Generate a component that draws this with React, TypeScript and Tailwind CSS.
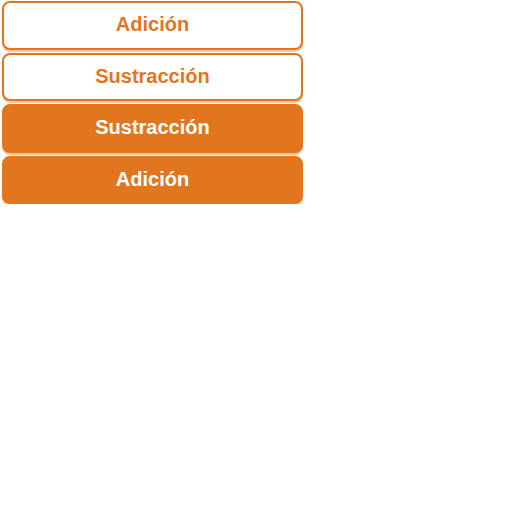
const items = [
  { label: "Adición", filled: false },
  { label: "Sustracción", filled: false },
  { label: "Sustracción", filled: true },
  { label: "Adición", filled: true },
];

export default function App() {
  return (
    <div className="flex flex-col gap-[3px] pl-[2px] pt-[1px] font-['Liberation_Sans',Arial,sans-serif]">
      {items.map((item, i) => (
        <button
          key={i}
          className={
            item.filled
              ? "w-[301px] h-[48.5px] rounded-lg border-2 border-[#e2761e] bg-[#e2761e] text-white text-[20px] font-bold leading-none pb-[2px] shadow-[0_2px_0_#f6c6a0]"
              : "w-[301px] h-[48.5px] rounded-lg border-2 border-[#e2761e] bg-white text-[#e2761e] text-[20px] font-bold leading-none pb-[2px] shadow-[0_2px_0_#f6c6a0]"
          }
        >
          {item.label}
        </button>
      ))}
    </div>
  );
}
